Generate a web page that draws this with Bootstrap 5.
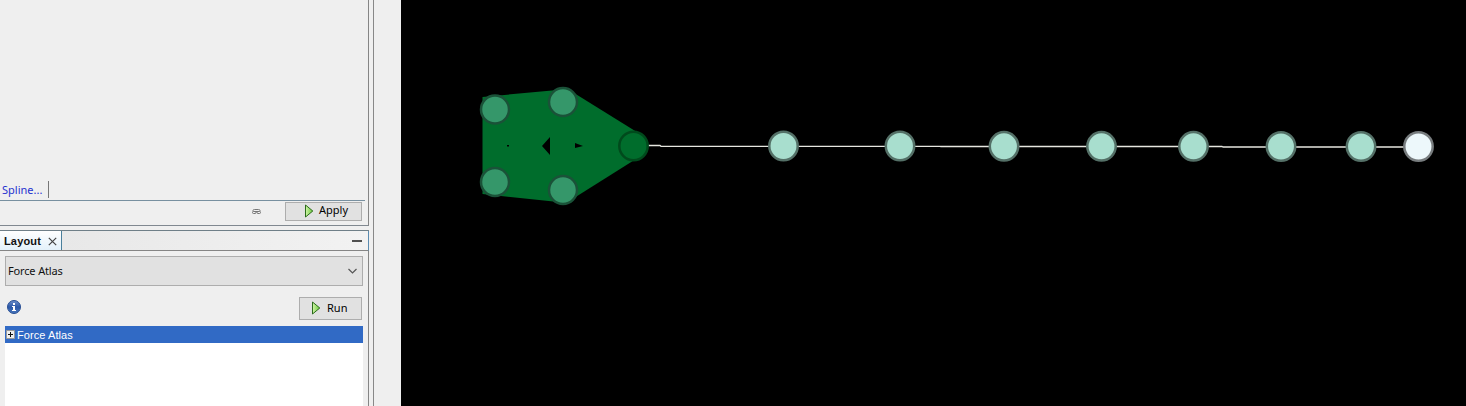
<!DOCTYPE html>
<html lang="en">
<head>
<meta charset="utf-8">
<meta name="viewport" content="width=device-width, initial-scale=1">
<title>Graph layout</title>
<link rel="stylesheet" href="https://cdn.jsdelivr.net/npm/bootstrap@5.3.0/dist/css/bootstrap.min.css">
<style>
body{font:11px/14px "Noto Sans","Liberation Sans",sans-serif;letter-spacing:-.15px;color:#111;background:#efefef;height:406px}
svg{display:block;flex:none}
.side{width:374px;border-right:1px solid #888}
.pane{width:369px;border-right:1px solid #858585}
.appearance{height:226px;border-bottom:1px solid #808890}
.spline-row{height:18px;padding-left:2px}
.spline-row a{color:#1f32d0;letter-spacing:0;border-right:1px solid #777;height:17px;line-height:17px;width:47px}
.apply-row{height:25px;margin-top:1px;border-top:1px solid #7890a0;margin-right:3px;padding:1px 3px 5px 0}
.tool-btn{font-size:11px;line-height:14px;color:#000;background:#e1e1e1;border:1px solid #adadad;border-radius:0;padding:0}
.tool-btn span{margin:-2px 0 0 5px}
.btn-apply{width:77px;height:19px;padding-left:18px}
.btn-run{width:63px;height:23px;padding-left:11px}
.tool-btn.btn-run span{margin-left:6px}
.layout-pane{margin-top:4px;border-top:1px solid #6f7f88}
.tabs{height:20px;border-bottom:1px solid #858585;background:linear-gradient(90deg,#e6e6e6,#f2f2f2);border-right:1px solid #5b8bb0;margin-right:-1px}
.tab-on{width:62px;background:linear-gradient(#fff,#e3f1fa);border-right:1px solid #4a7f9b;padding:1px 0 0 4px;font:bold 11px/18px "Liberation Sans",sans-serif;letter-spacing:.15px}
.combo{height:30px;margin:5px 5px 0;background:#e1e1e1;border:1px solid #adadad;padding:0 5px 0 2px}
.run-row{margin:11px 6px 0 7px;height:23px}
.tree{margin:6px 5px 0;background:#fff}
.tree-row{height:17px;background:#316ac5;color:#fff;font:11px/17px "Liberation Sans",sans-serif;padding-left:1px;letter-spacing:.08px}
.tree-row span{margin-left:2px;padding-top:2px}
.canvas{width:1065px;height:406px;background:#000}
</style>
</head>
<body class="d-flex overflow-hidden">
<svg width="0" height="0" class="position-absolute"><defs><linearGradient id="go" x2="1" y2="0"><stop stop-color="#d0f5a8"/><stop offset="1" stop-color="#6cc93c"/></linearGradient></defs></svg>
<aside class="side d-flex flex-column flex-shrink-0">
  <section class="pane appearance d-flex flex-column justify-content-end">
    <div class="spline-row d-flex"><a href="#" class="text-decoration-none">Spline...</a></div>
    <div class="apply-row d-flex justify-content-end align-items-center">
      <svg width="9" height="7" viewBox="0 0 9 7" class="me-4" fill="none" stroke="#777"><path d="M1 3.500v-1q0-1 1.500-1h4q1.500 0 1.500 1v1M2.500 3.500h4"/><rect x=".5" y="3.500" width="3.500" height="2" rx="1"/><rect x="5" y="3.500" width="3.500" height="2" rx="1"/></svg>
      <button class="btn tool-btn btn-apply d-flex align-items-center"><svg width="10" height="14" viewBox="0 0 10 14"><path d="M1.500 1v12L8.800 7z" fill="url(#go)" stroke="#2b6b1b"/></svg><span>Apply</span></button>
    </div>
  </section>
  <section class="pane layout-pane d-flex flex-column flex-grow-1">
    <div class="tabs d-flex justify-content-between">
      <div class="tab-on d-flex align-items-center"><span>Layout</span><svg width="9" height="9" viewBox="0 0 9 9" class="ms-auto me-1"><path d="M.8.8l7.400 7.400M8.200.8L.8 8.200" stroke="#444" stroke-width="1.200"/></svg></div>
      <svg width="17" height="19" viewBox="0 0 17 19"><path d="M1 10h10" stroke="#505050" stroke-width="2"/></svg>
    </div>
    <div class="combo d-flex align-items-center justify-content-between"><span>Force Atlas</span><svg width="9" height="6" viewBox="0 0 9 6"><path d="M.5 1l4 4 4-4" fill="none" stroke="#555" stroke-width="1.200"/></svg></div>
    <div class="run-row d-flex justify-content-between">
      <svg width="14" height="20" viewBox="0 0 14 20"><defs><linearGradient id="info" x2="0" y2="1"><stop stop-color="#6d8fcb"/><stop offset=".5" stop-color="#2c58a8"/><stop offset="1" stop-color="#4977bd"/></linearGradient></defs><circle cx="7" cy="10" r="6.500" fill="url(#info)" stroke="#284f94"/><path d="M6 6h2v2H6zM5 9h3v4h1v1H5v-1h1v-3H5z" fill="#fff"/></svg>
      <button class="btn tool-btn btn-run d-flex align-items-center"><svg width="10" height="14" viewBox="0 0 10 14" style="margin-top:-1px"><path d="M1.500 1v12L8.800 7z" fill="url(#go)" stroke="#2b6b1b"/></svg><span>Run</span></button>
    </div>
    <div class="tree flex-grow-1"><div class="tree-row d-flex align-items-center"><svg width="9" height="9" viewBox="0 0 9 9"><path d="M.5.5h8v8h-8z" fill="#eee" stroke="#999"/><path d="M2 4.500h5M4.500 2v5" stroke="#111"/></svg><span>Force Atlas</span></div></div>
  </section>
</aside>
<main class="ms-auto flex-shrink-0 canvas">
  <svg width="1065" height="406" viewBox="401 0 1065 406">
    <path d="M648 145.500H660L661 146.300H940L941 146.500H1222L1223 147H1419" fill="none" stroke="#e6e6e0" stroke-width="1.300"/>
    <path d="M482.500 97L563 89.500L574 93L636 131.500V159L574 198L563 202.500L482.500 194z" fill="#006d2c"/>
    <path d="M542 146l8-9v18zM575 143l8 3-8 2zM507 145h2v1.500h-2z" fill="#000"/>
    <g fill="#35976a" stroke="#1a5238" stroke-width="2.500"><circle cx="495" cy="109.500" r="14"/><circle cx="563" cy="102" r="14"/><circle cx="495" cy="182" r="14"/><circle cx="563" cy="190" r="14"/></g>
    <circle cx="633.500" cy="146" r="14.200" fill="#006d2c" stroke="#004a1c" stroke-width="2.500"/>
    <g fill="#a8dece" stroke="#547067" stroke-width="2.500"><circle cx="783.500" cy="146" r="14.200"/><circle cx="900" cy="146" r="14.200"/><circle cx="1004" cy="146.300" r="14.200"/><circle cx="1101.500" cy="146.300" r="14.200"/><circle cx="1193.500" cy="146.300" r="14.200"/><circle cx="1281" cy="146.500" r="14.200"/><circle cx="1361" cy="146.500" r="14.200"/></g>
    <circle cx="1418.500" cy="146.500" r="14.200" fill="#edf8fb" stroke="#777c7e" stroke-width="2.500"/>
  </svg>
</main>
<script src="https://cdn.jsdelivr.net/npm/bootstrap@5.3.0/dist/js/bootstrap.bundle.min.js"></script>
</body>
</html>
